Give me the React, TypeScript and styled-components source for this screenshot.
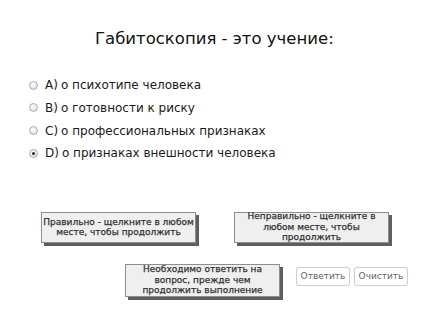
import React from 'react';
import styled, { createGlobalStyle } from 'styled-components';

const GlobalStyle = createGlobalStyle`
    html, body {
        margin: 0;
        padding: 0;
        background: #ffffff;
    }
    body {
        font-family: "DejaVu Sans", "Liberation Sans", sans-serif;
        color: #1a1a1a;
    }
`;

const Slide = styled.div`
    width: 427px;
    height: 320px;
    overflow: hidden;
    display: flex;
    flex-direction: column;
`;

const Title = styled.h1`
    margin: 28px 0 0 95px;
    font-size: 16.5px;
    line-height: 22px;
    font-weight: normal;
    color: #111;
`;

const Options = styled.ul`
    list-style: none;
    margin: 28px 0 0 29px;
    padding: 0;
    display: flex;
    flex-direction: column;
    gap: 8.2px;
`;

const Option = styled.li`
    display: flex;
    align-items: center;
    height: 14.5px;
    font-size: 12px;
    color: #1a1a1a;
`;

const Radio = styled.span<{ checked?: boolean }>`
    position: relative;
    width: 7px;
    height: 7px;
    border-radius: 50%;
    border: 1px solid #aeaeae;
    background: radial-gradient(circle at 40% 35%, #ffffff 0%, #dcdcdc 80%);
    margin-right: 7px;
    flex-shrink: 0;

    &::after {
        content: '';
        display: ${p => (p.checked ? 'block' : 'none')};
        position: absolute;
        left: 2px;
        top: 2px;
        width: 3px;
        height: 3px;
        border-radius: 50%;
        background: #222;
    }
`;

const Letter = styled.span`
    margin-right: 3px;
`;

const FeedbackRow = styled.div<{ indent: number; top: number }>`
    display: flex;
    align-items: flex-start;
    margin-top: ${p => p.top}px;
    padding-left: ${p => p.indent}px;
`;

const Feedback = styled.div<{ tall?: boolean }>`
    box-sizing: border-box;
    width: 155px;
    height: ${p => (p.tall ? 33 : 31)}px;
    display: flex;
    align-items: center;
    justify-content: center;
    text-align: center;
    padding: 0;
    background: #efefef;
    border: 1px solid #8e8e8e;
    box-shadow: 3px 3px 0 #5e5e5e;
    font-size: 9px;
    line-height: 10.4px;
    font-weight: normal;
    -webkit-text-stroke: 0.25px #333;
    color: #333;
`;

const Gap = styled.div<{ w: number }>`
    width: ${p => p.w}px;
    flex-shrink: 0;
`;

const Button = styled.button`
    box-sizing: border-box;
    margin-top: 3px;
    height: 19px;
    width: 54px;
    padding: 0;
    background: #ffffff;
    border: 1px solid #cfcfcf;
    border-radius: 3px;
    box-shadow: 0 0 1px #e0e0e0;
    font-family: "DejaVu Sans", "Liberation Sans", sans-serif;
    font-size: 9px;
    color: #666;
`;

const options = [
    { letter: 'A)', text: 'о психотипе человека' },
    { letter: 'B)', text: 'о готовности к риску' },
    { letter: 'C)', text: 'о профессиональных признаках' },
    { letter: 'D)', text: 'о признаках внешности человека', checked: true },
];

export default function App() {
    return (
        <Slide>
            <GlobalStyle />
            <Title>Габитоскопия - это учение:</Title>
            <Options>
                {options.map((o, idx) => (
                    <Option key={idx}>
                        <Radio checked={o.checked} />
                        <Letter>{o.letter}</Letter>
                        {o.text}
                    </Option>
                ))}
            </Options>
            <FeedbackRow indent={41} top={51}>
                <Feedback>Правильно - щелкните в любом месте, чтобы продолжить</Feedback>
                <Gap w={38} />
                <Feedback>Неправильно - щелкните в любом месте, чтобы продолжить</Feedback>
            </FeedbackRow>
            <FeedbackRow indent={125} top={21}>
                <Feedback tall>Необходимо ответить на вопрос, прежде чем продолжить выполнение</Feedback>
                <Gap w={16} />
                <Button>Ответить</Button>
                <Gap w={4} />
                <Button>Очистить</Button>
            </FeedbackRow>
        </Slide>
    );
}
